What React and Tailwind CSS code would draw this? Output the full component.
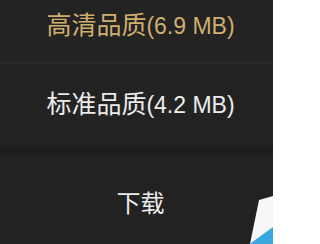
function Label({ cjk, latin, color }) {
  return (
    <span className={`leading-none whitespace-nowrap ${color}`}>
      <span className="text-[25px]">{cjk}</span>
      {latin && <span className="text-[23px]">{latin}</span>}
    </span>
  );
}

export default function App() {
  const font = { fontFamily: '"Liberation Sans", "Noto Sans CJK SC", sans-serif' };
  return (
    <div className="relative w-[273px] h-[244px] overflow-hidden bg-[#232323]" style={font}>
      <div className="flex flex-col h-full">
        <div className="h-[63px] pl-[8px] flex items-center justify-center pb-[12px] shrink-0">
          <Label cjk="高清品质" latin="(6.9 MB)" color="text-[#cfae6f]" />
        </div>
        <div className="h-px bg-[#292929] shrink-0" />
        <div className="h-[80px] pl-[8px] flex items-center justify-center shrink-0">
          <Label cjk="标准品质" latin="(4.2 MB)" color="text-[#ececec]" />
        </div>
        <div className="h-[12px] bg-gradient-to-b from-[#212121] via-[#1d1d1d] to-[#212121] shrink-0" />
        <div className="h-[96px] pl-[8px] flex items-center justify-center shrink-0 bg-[#222222]">
          <span className="text-[24px] leading-none text-[#ececec]">下载</span>
        </div>
      </div>
      <svg className="absolute right-0 bottom-0" width="25" height="50" viewBox="248 194 25 50">
        <polygon points="259,200 273,196 273,244 250,244" fill="#f7f7f7" />
        <polygon points="251,243 273,227 273,244 250,244" fill="#3aa7df" />
      </svg>
    </div>
  );
}
